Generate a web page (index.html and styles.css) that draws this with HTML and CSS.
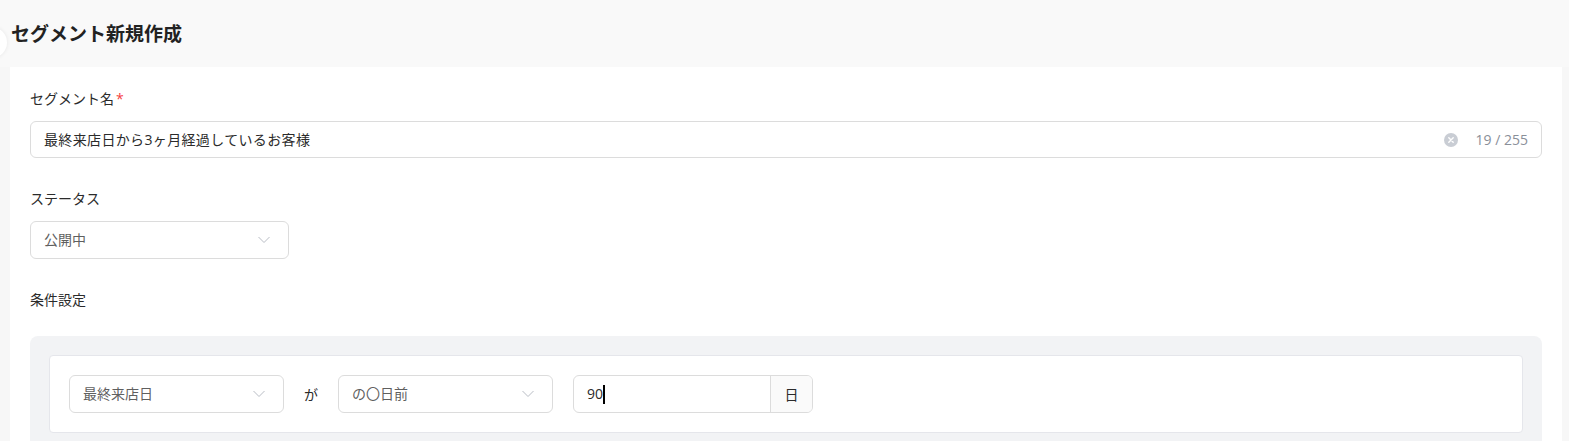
FILE: index.html
```html
<!DOCTYPE html>
<html lang="ja">
<head>
<meta charset="utf-8">
<link rel="stylesheet" href="styles.css">
</head>
<body>
<div class="page">
  <span class="collapse-btn"></span>
  <header class="header">
    <h1 class="title">セグメント新規作成</h1>
  </header>
  <main class="card">
    <div class="field">
      <label class="label">セグメント名<span class="req">*</span></label>
      <div class="input wide">
        <span class="value spaced">最終来店日から3ヶ月経過しているお客様</span>
        <span class="suffix">
          <svg class="clear" width="14" height="14" viewBox="0 0 14 14"><circle cx="7" cy="7" r="7" fill="#c9cdd4"/><path d="M4.8 4.8 9.2 9.2M9.2 4.8 4.8 9.2" stroke="#fff" stroke-width="1.4" stroke-linecap="round"/></svg>
          <span class="count">19 / 255</span>
        </span>
      </div>
    </div>
    <div class="field">
      <label class="label">ステータス</label>
      <div class="input select status">
        <span class="value muted">公開中</span>
        <svg class="chev" width="12" height="8" viewBox="0 0 12 8"><path d="M0.5 1 6 6.5 11.5 1" fill="none" stroke="#b8bcc4" stroke-width="1"/></svg>
      </div>
    </div>
    <div class="field">
      <label class="label cond-label">条件設定</label>
      <div class="cond-wrap">
        <div class="cond-row">
          <div class="input select cond-select">
            <span class="value muted">最終来店日</span>
            <svg class="chev" width="12" height="8" viewBox="0 0 12 8"><path d="M0.5 1 6 6.5 11.5 1" fill="none" stroke="#b8bcc4" stroke-width="1"/></svg>
          </div>
          <span class="ga">が</span>
          <div class="input select cond-select">
            <span class="value muted">の〇日前</span>
            <svg class="chev" width="12" height="8" viewBox="0 0 12 8"><path d="M0.5 1 6 6.5 11.5 1" fill="none" stroke="#b8bcc4" stroke-width="1"/></svg>
          </div>
          <div class="group">
            <div class="group-input"><span class="value">90</span><span class="caret"></span></div>
            <div class="addon">日</div>
          </div>
        </div>
      </div>
    </div>
  </main>
</div>
</body>
</html>
```

FILE: styles.css
```css
* { box-sizing: border-box; }
html, body { margin: 0; padding: 0; }
body {
  background: #f7f7f7;
  font-family: "Open Sans", "Noto Sans CJK JP", sans-serif;
  color: #2b2b2b;
  font-size: 14px;
  overflow: hidden;
  height: 441px;
}
.page {
  position: relative;
  padding: 0 7px 0 10px;
}
.collapse-btn {
  position: absolute;
  left: -24px;
  top: 27px;
  width: 31px;
  height: 31px;
  border-radius: 50%;
  background: #fff;
  box-shadow: 0 0 4px rgba(0,0,0,0.08);
}
.header {
  height: 67px;
  display: flex;
  align-items: center;
  background: #f9f9f9;
  margin: 0 -7px 0 -10px;
  padding-left: 11px;
}
.title {
  margin: 0;
  font-family: "Noto Sans CJK JP", sans-serif;
  font-size: 19px;
  font-weight: 700;
  color: #222;
  line-height: 26px;
  position: relative;
  top: -1px;
}
.card {
  background: #fff;
  padding: 21px 20px 0 20px;
  height: 400px;
}
.field { margin-bottom: 30px; }
.label {
  display: block;
  line-height: 22px;
  margin-bottom: 11px;
  font-size: 14px;
  color: #2b2b2b;
}
.req { color: #f53f3f; margin-left: 2px; }
.input {
  display: flex;
  align-items: center;
  height: 37px;
  border: 1px solid #dcdcdc;
  border-radius: 6px;
  padding: 0 13px;
  background: #fff;
}
.value { flex: 1; line-height: 22px; white-space: nowrap; }
.spaced { letter-spacing: 0.35px; }
.muted { color: #5f5f5f; }
.suffix { display: flex; align-items: center; gap: 18px; }
.count { color: #8a8f99; font-size: 14px; }
.clear { display: block; }
.select .chev { margin-right: 5px; }
.status { width: 259px; height: 38px; }
.cond-label { margin-bottom: 25px; }
.cond-wrap {
  background: #f2f3f5;
  border-radius: 8px;
  padding: 19px 19px 0 19px;
  height: 120px;
}
.cond-row {
  display: flex;
  align-items: center;
  gap: 20px;
  background: #fff;
  border: 1px solid #e5e6eb;
  border-radius: 4px;
  padding: 19px 19px;
}
.cond-select { width: 215px; height: 38px; }
.ga { color: #2b2b2b; font-family: "Noto Sans CJK JP", sans-serif; }
.group {
  display: flex;
  width: 240px;
  height: 38px;
  border: 1px solid #dcdcdc;
  border-radius: 6px;
  overflow: hidden;
}
.group-input {
  flex: 1;
  display: flex;
  align-items: center;
  padding-left: 13px;
}
.group-input .value { flex: none; }
.caret {
  display: inline-block;
  width: 2px;
  height: 19px;
  background: #000;
}
.addon {
  width: 42px;
  border-left: 1px solid #dcdcdc;
  background: #fafafa;
  display: flex;
  align-items: center;
  justify-content: center;
  color: #2b2b2b;
}
```
